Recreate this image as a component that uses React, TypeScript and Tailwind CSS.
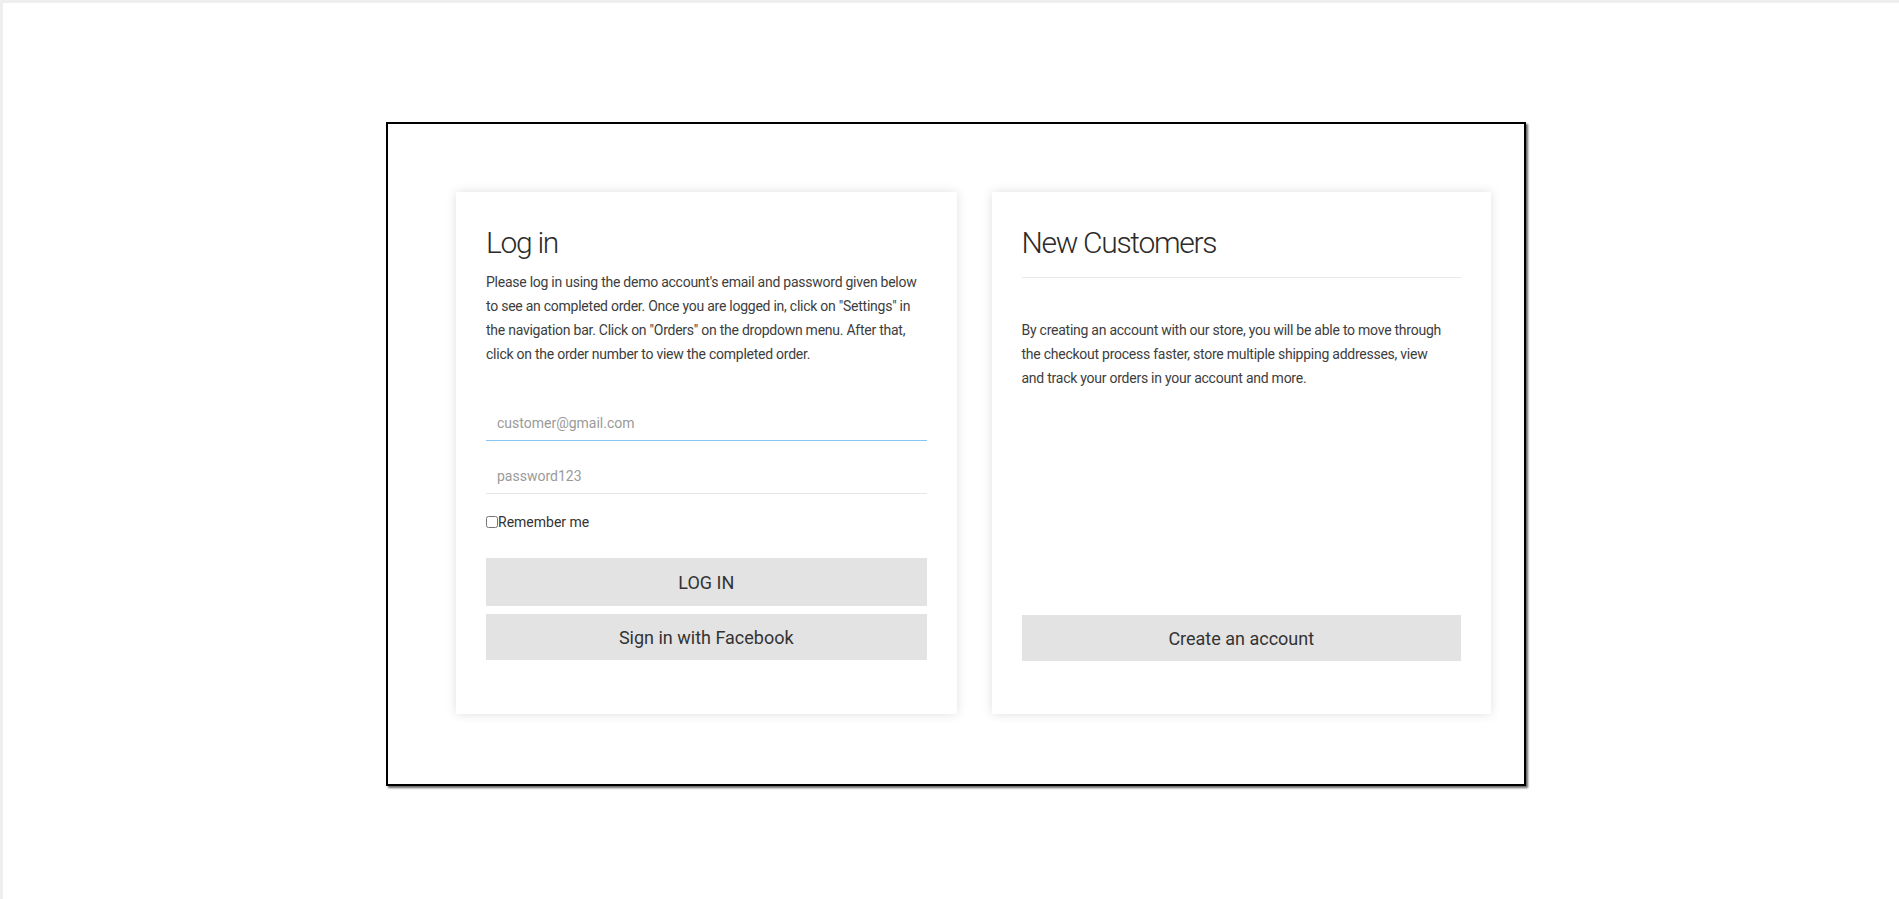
import React from "react";

const body = { fontFamily: "Roboto, 'Liberation Sans', sans-serif" };

export default function App() {
  return (
    <div className="min-h-[899px] w-full bg-white border-t-[3px] border-l-[3px] border-[#eeeeee]" style={body}>
      <div className="pt-[119px] pb-[100px]">
        {/* outer framed box */}
        <div className="ml-[383px] w-[1140px] border-2 border-black shadow-[2px_2px_2px_rgba(0,0,0,0.6)] pl-[68px] pr-[33px] pt-[68px] pb-[70px]">
          <div className="flex gap-[35px]">
            {/* Log in card */}
            <div className="w-[501px] h-[522px] bg-white shadow-[0_0_10px_rgba(0,0,0,0.13)] px-[30px] pt-[33px] flex flex-col">
              <h2 className="text-[30px] leading-[35px] font-light text-[#2b2b2b] tracking-[-1.3px]">
                Log in
              </h2>
              <p className="mt-[10px] text-[14px] leading-[24px] text-[#3d3d3d] tracking-[-0.25px] whitespace-nowrap">
                Please log in using the demo account's email and password given below
                <br />
                to see an completed order. Once you are logged in, click on "Settings" in
                <br />
                the navigation bar. Click on "Orders" on the dropdown menu. After that,
                <br />
                click on the order number to view the completed order.
              </p>
              <input
                type="text"
                placeholder="customer@gmail.com"
                className="mt-[39px] h-[36px] w-full border-b-[1.5px] border-[#86c6f3] px-[11px] text-[14px] text-[#444] placeholder:text-[#9a9a9a] outline-none"
              />
              <input
                type="password"
                placeholder="password123"
                className="mt-[17px] h-[36px] w-full border-b-[1.5px] border-[#e6e6e6] px-[11px] text-[14px] text-[#444] placeholder:text-[#9a9a9a] outline-none"
              />
              <label className="mt-[18px] h-[20px] flex items-center text-[14px] text-[#333]">
                <input type="checkbox" className="w-[12px] h-[12px] m-0 accent-gray-400" />
                <span>Remember me</span>
              </label>
              <button className="mt-[26px] h-[48px] w-full bg-[#e3e3e3] text-[18px] text-[#333]">
                LOG IN
              </button>
              <button className="mt-[8px] h-[46px] w-full bg-[#e3e3e3] text-[18px] text-[#333]">
                Sign in with Facebook
              </button>
            </div>

            {/* New customers card */}
            <div className="w-[500px] h-[522px] bg-white shadow-[0_0_10px_rgba(0,0,0,0.13)] px-[30px] pt-[33px] pb-[53px] flex flex-col">
              <h2 className="text-[30px] leading-[35px] font-light text-[#2b2b2b] tracking-[-1.3px]">
                New Customers
              </h2>
              <div className="mt-[17px] h-px bg-[#e8e8e8]" />
              <p className="mt-[40px] text-[14px] leading-[24px] text-[#3d3d3d] tracking-[-0.25px] whitespace-nowrap">
                By creating an account with our store, you will be able to move through
                <br />
                the checkout process faster, store multiple shipping addresses, view
                <br />
                and track your orders in your account and more.
              </p>
              <button className="mt-auto h-[46px] w-full bg-[#e3e3e3] text-[18px] text-[#333]">
                Create an account
              </button>
            </div>
          </div>
        </div>
      </div>
    </div>
  );
}
